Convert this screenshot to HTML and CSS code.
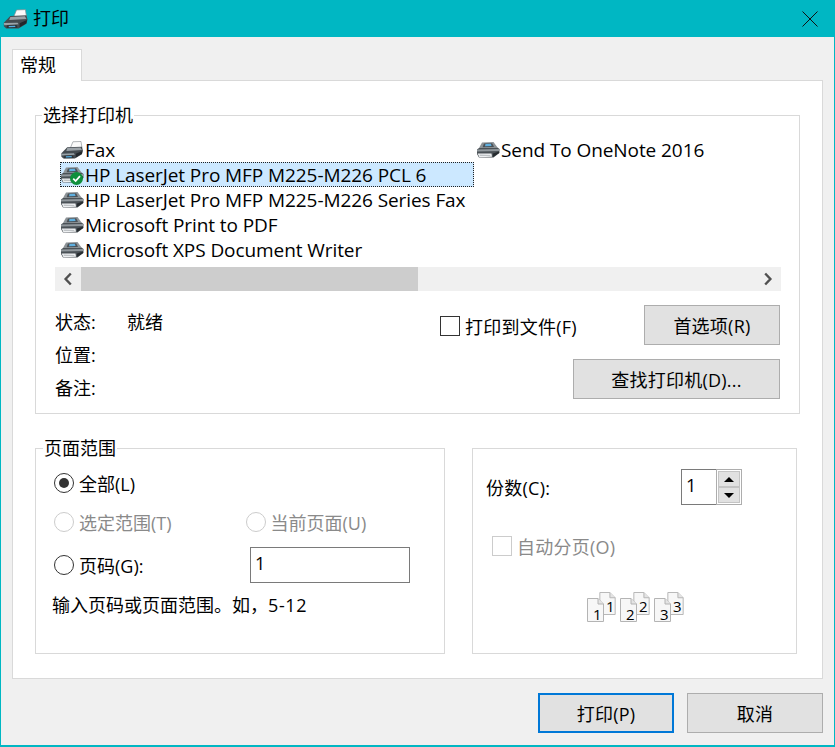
FILE: index.html
```html
<!DOCTYPE html>
<html lang="zh-CN">
<head>
<meta charset="utf-8">
<title>打印</title>
<link rel="stylesheet" href="styles.css">
</head>
<body>
<svg class="defs" width="0" height="0" aria-hidden="true">
  <symbol id="printer" viewBox="0 0 24 18">
    <path d="M6 1.5 L17.5 1 L21.5 6.5 L3 7 Z" fill="#8d9397"/>
    <path d="M8 2.5 L16.2 2.2 L18 6 L6.6 6.2 Z" fill="#4b5258"/>
    <path d="M9.5 3 L14.8 2.8 L15.6 5 L9 5.2 Z" fill="#5fb0e0"/>
    <path d="M1 8.5 L3 7 L21.5 6.5 L23.5 8 L23.3 12 L17.5 16.5 L3 16.5 L1 13 Z" fill="#4a5156"/>
    <path d="M1 8.6 L23.5 8 L23.4 10 L1.1 10.6 Z" fill="#90979c"/>
    <path d="M1.6 12.4 L15.5 12.6 L16 15.8 L3.4 16.2 Z" fill="#eef0f2"/>
    <path d="M3.6 13.7 L14.2 13.9 L14.3 14.6 L3.9 14.5 Z" fill="#8f959a"/>
    <path d="M17 12.5 L23.2 10.5 L23.2 12 L17 16 Z" fill="#262b2f"/>
  </symbol>
  <symbol id="printer-open" viewBox="0 0 24 19">
    <path d="M10 8 L13 .8 L21.5 .5 L22.5 7 Z" fill="#fafafa" stroke="#8a9094" stroke-width=".7"/>
    <path d="M.8 13 L7 6.5 L22.5 6 L23.5 10 L22.5 14 L15 18.5 L3 18.5 L.8 16.5 Z" fill="#444b50"/>
    <path d="M7 7.5 L21 6.8 L22.5 9.5 L6 10.5 Z" fill="#9ba2a7"/>
    <path d="M.8 13.4 L14 13 L15 14.6 L1.2 15.4 Z" fill="#9aa3a8"/>
    <path d="M4 15.6 L13 15.2 L14 18 L3.5 18.2 Z" fill="#2d3236"/>
    <path d="M5.5 16.1 L11.5 15.9 L12 17.2 L5.5 17.4 Z" fill="#54aee2"/>
    <path d="M16 13.5 L23 10.5 L22.5 13.5 L16 17.5 Z" fill="#22272b"/>
  </symbol>
  <symbol id="page" viewBox="0 0 17 24">
    <path d="M.5 .5 H11 L16.5 6 V23.5 H.5 Z" fill="#f7f7f7" stroke="#b4b4b4"/>
    <path d="M11 .5 V6 H16.5" fill="#e4e4e4" stroke="#b4b4b4"/>
  </symbol>
</svg>

<main class="window">
  <header class="titlebar">
    <svg class="title-icon"><use href="#printer-open"/></svg>
    <span class="title-text">打印</span>
    <svg class="close" viewBox="0 0 16 16"><path d="M.5 .5 L15.5 15.5 M15.5 .5 L.5 15.5" stroke="#111" fill="none"/></svg>
  </header>

  <div class="tabs"><div class="tab">常规</div></div>

  <section class="panel">
    <div class="group group-printer">
      <div class="legend">选择打印机</div>
      <ul class="printers">
        <li class="printer"><svg class="p-icon"><use href="#printer-open"/></svg>Fax</li>
        <li class="printer selected">
          <span class="icon-wrap">
            <svg class="p-icon"><use href="#printer"/></svg>
            <svg class="default-badge" viewBox="0 0 12 12"><circle cx="6" cy="6" r="6" fill="#0e8f3c"/><path d="M3 6.2 L5.2 8.4 L9.2 3.8" stroke="#fff" stroke-width="1.6" fill="none"/></svg>
          </span>HP LaserJet Pro MFP M225-M226 PCL 6</li>
        <li class="printer"><svg class="p-icon"><use href="#printer"/></svg>HP LaserJet Pro MFP M225-M226 Series Fax</li>
        <li class="printer"><svg class="p-icon"><use href="#printer"/></svg>Microsoft Print to PDF</li>
        <li class="printer"><svg class="p-icon"><use href="#printer"/></svg>Microsoft XPS Document Writer</li>
        <li class="printer"><svg class="p-icon"><use href="#printer"/></svg>Send To OneNote 2016</li>
      </ul>
      <div class="hscroll">
        <span class="hs-btn"><svg viewBox="0 0 10 14" class="chev"><path d="M7.8 1.5 L2.6 7 L7.8 12.5" fill="none" stroke="#505050" stroke-width="2.4"/></svg></span>
        <span class="hs-thumb"></span>
        <span class="hs-track"></span>
        <span class="hs-btn"><svg viewBox="0 0 10 14" class="chev"><path d="M2.2 1.5 L7.4 7 L2.2 12.5" fill="none" stroke="#505050" stroke-width="2.4"/></svg></span>
      </div>
      <div class="printer-info">
        <dl class="info">
          <div class="info-row"><dt>状态:</dt><dd>就绪</dd></div>
          <div class="info-row"><dt>位置:</dt><dd></dd></div>
          <div class="info-row"><dt>备注:</dt><dd></dd></div>
        </dl>
        <label class="check to-file"><span class="box"></span>打印到文件(F)</label>
        <div class="info-actions">
          <button class="btn btn-pref">首选项(R)</button>
          <button class="btn btn-find">查找打印机(D)...</button>
        </div>
      </div>
    </div>

    <div class="lower">
      <div class="group group-range">
        <div class="legend">页面范围</div>
        <div class="radio-row row-all"><span class="radio on"></span>全部(L)</div>
        <div class="radio-row row-sel disabled">
          <span class="radio-item"><span class="radio"></span>选定范围(T)</span>
          <span class="radio-item item-cur"><span class="radio"></span>当前页面(U)</span>
        </div>
        <div class="radio-row row-pages">
          <span class="radio-item item-pages"><span class="radio"></span>页码(G):</span>
          <span class="textbox textbox-pages">1</span>
        </div>
        <p class="hint">输入页码或页面范围。如，<span class="hint-num">5-12</span></p>
      </div>

      <div class="group group-copies">
        <div class="copies-row">
          <span>份数(C):</span>
          <div class="spin">
            <span class="spin-value">1</span>
            <span class="spin-btns">
              <span class="spin-btn"><i class="tri up"></i></span>
              <span class="spin-btn"><i class="tri down"></i></span>
            </span>
          </div>
        </div>
        <label class="check collate disabled"><span class="box"></span>自动分页(O)</label>
        <svg class="collate-icon" viewBox="0 0 98 31" width="98" height="31">
          <use href="#page" x="12" y="0" width="17" height="23"/>
          <text x="19" y="20" class="pg">1</text>
          <use href="#page" x="0" y="6" width="17" height="24"/>
          <text x="6" y="28" class="pg">1</text>
          <use href="#page" x="46" y="0" width="17" height="23"/>
          <text x="52" y="20" class="pg">2</text>
          <use href="#page" x="33" y="6" width="17" height="24"/>
          <text x="39" y="28" class="pg">2</text>
          <use href="#page" x="80" y="0" width="17" height="23"/>
          <text x="86" y="20" class="pg">3</text>
          <use href="#page" x="67" y="6" width="17" height="24"/>
          <text x="73" y="28" class="pg">3</text>
        </svg>
      </div>
    </div>
  </section>

  <footer class="footer">
    <button class="btn btn-primary">打印(P)</button>
    <button class="btn">取消</button>
  </footer>
</main>
</body>
</html>
```

FILE: styles.css
```css
* { box-sizing: border-box; }
html, body { margin: 0; padding: 0; }
body {
  width: 835px;
  height: 747px;
  overflow: hidden;
  font-family: "Open Sans", "Noto Sans CJK SC", sans-serif;
  font-size: 18px;
  color: #000;
  background: #f0f0f0;
}
.defs { position: absolute; }
.window {
  width: 835px;
  height: 747px;
  background: #f0f0f0;
  border: 1px solid #00b7c3;
  border-top: 0;
  border-bottom-width: 2px;
}
.titlebar {
  height: 37px;
  margin: 0 -1px;
  padding: 0 17px 0 3px;
  background: #00b7c3;
  display: flex;
  align-items: center;
}
.title-icon { width: 25px; height: 20px; margin-right: 5px; }
.title-text { flex: 1; line-height: 37px; }
.close { width: 16px; height: 16px; }

.tabs { padding: 12px 0 0 11px; height: 43px; }
.tab {
  width: 70px;
  height: 32px;
  background: #fff;
  border: 1px solid #d9d9d9;
  border-bottom: 0;
  padding-left: 7px;
  line-height: 31px;
  position: relative;
  z-index: 1;
}
.panel {
  width: 811px;
  height: 599px;
  margin-left: 11px;
  background: #fff;
  border: 1px solid #d9d9d9;
  padding: 34px 0 0 22px;
}
.group { border: 1px solid #d9d9d9; background: #fff; }
.legend {
  width: fit-content;
  height: 24px;
  line-height: 24px;
  margin: -13px 0 0 -13px;
  padding: 0 1px;
  background: #fff;
}
.group-range .legend { margin-left: -11px; }

/* printer group */
.group-printer { width: 765px; height: 299px; padding: 0 18px 0 19px; }
.printers {
  list-style: none;
  margin: 10px 0 0;
  padding: 0 0 0 5px;
  display: grid;
  grid-auto-flow: column;
  grid-template-rows: repeat(5, 25px);
  grid-template-columns: 416px 1fr;
}
.printer {
  display: flex;
  align-items: center;
  white-space: nowrap;
  height: 25px;
  font-size: 19px;
  letter-spacing: -.08px;
}
.p-icon { width: 24px; height: 18px; margin-right: 1px; flex: none; }
.selected {
  width: 414px;
  background: #cce8ff;
  outline: 1px dotted #222;
  outline-offset: -1px;
}
.icon-wrap { position: relative; display: inline-flex; }
.default-badge { position: absolute; left: 10px; top: 6px; width: 13px; height: 13px; }
.hscroll {
  margin-top: 5px;
  height: 24px;
  display: flex;
  background: #f0f0f0;
}
.hs-btn { width: 26px; display: flex; align-items: center; justify-content: center; }
.chev { width: 10px; height: 14px; }
.hs-thumb { width: 337px; background: #cdcdcd; }
.hs-track { flex: 1; }
.printer-info {
  margin-top: 14px;
  display: grid;
  grid-template-columns: 385px 133px 208px;
}
.info { margin: -1px 0 0; }
.info-row { display: flex; height: 33px; align-items: center; }
.info-row dt { width: 72px; }
.info-row dd { margin: 0; }
.check { display: flex; align-items: center; white-space: nowrap; letter-spacing: .25px; }
.box {
  width: 20px;
  height: 20px;
  border: 1px solid #333;
  background: #fff;
  margin-right: 5px;
  flex: none;
}
.to-file { height: 20px; margin-top: 11px; }
.info-actions {
  display: flex;
  flex-direction: column;
  align-items: flex-end;
  gap: 14px;
  margin-right: 1px;
}
.btn {
  width: 136px;
  height: 40px;
  background: #e1e1e1;
  border: 1px solid #adadad;
  border-radius: 0;
  font: inherit;
  letter-spacing: .25px;
  color: #000;
  padding: 0;
}
.btn-find { width: 207px; }
.btn-primary { border: 2px solid #0078d7; }

/* lower groups */
.lower { display: flex; gap: 27px; margin-top: 34px; }
.group-range { width: 410px; height: 206px; padding: 0 0 0 18px; }
.group-copies { width: 325px; height: 206px; padding: 0 13px; }
.radio-row { display: flex; align-items: center; white-space: nowrap; }
.radio-item { display: flex; align-items: center; }
.radio {
  width: 20px;
  height: 20px;
  border-radius: 50%;
  border: 1px solid #333;
  background: #fff;
  margin-right: 5px;
  flex: none;
  display: inline-block;
  position: relative;
}
.radio.on::after {
  content: "";
  position: absolute;
  left: 4px;
  top: 4px;
  width: 10px;
  height: 10px;
  border-radius: 50%;
  background: #333;
}
.row-all { height: 24px; margin-top: 11px; }
.row-sel { height: 24px; margin-top: 15px; }
.item-cur { margin-left: 74px; }
.disabled { color: #8a8a8a; }
.disabled .radio, .disabled .box { border-color: #ccc; }
.row-pages { height: 36px; margin-top: 13px; }
.item-pages { width: 196px; margin-top: -1px; }
.textbox {
  display: block;
  width: 160px;
  height: 36px;
  border: 1px solid #7a7a7a;
  padding-left: 4px;
  line-height: 30px;
}
.hint { margin: 10px 0 0 -2px; height: 24px; line-height: 24px; }
.hint-num { letter-spacing: .6px; }

.copies-row { display: flex; align-items: center; margin-top: 20px; height: 36px; letter-spacing: .25px; }
.copies-row > span:first-child { width: 195px; }
.spin {
  width: 61px;
  height: 36px;
  border: 1px solid #7a7a7a;
  display: flex;
}
.spin-value { flex: 1; padding-left: 4px; line-height: 30px; }
.spin-btns {
  width: 26px;
  margin: -1px -1px -1px 0;
  border: 1px solid #adadad;
  padding: 1px;
  display: flex;
  flex-direction: column;
  background: #fff;
}
.spin-btn {
  flex: 1;
  background: #e1e1e1;
  border: 1px solid #c4c4c4;
  display: flex;
  align-items: center;
  justify-content: center;
}
.tri { width: 0; height: 0; border-left: 5px solid transparent; border-right: 5px solid transparent; }
.tri.up { border-bottom: 5px solid #000; }
.tri.down { border-top: 5px solid #000; }
.collate { height: 20px; margin: 31px 0 0 6px; }
.collate-icon { display: block; margin: 36px 0 0 101px; }
.pg { font-family: "Open Sans", sans-serif; font-size: 15px; fill: #000; }

.footer {
  display: flex;
  justify-content: flex-end;
  gap: 13px;
  padding: 14px 11px 0 0;
}
```
